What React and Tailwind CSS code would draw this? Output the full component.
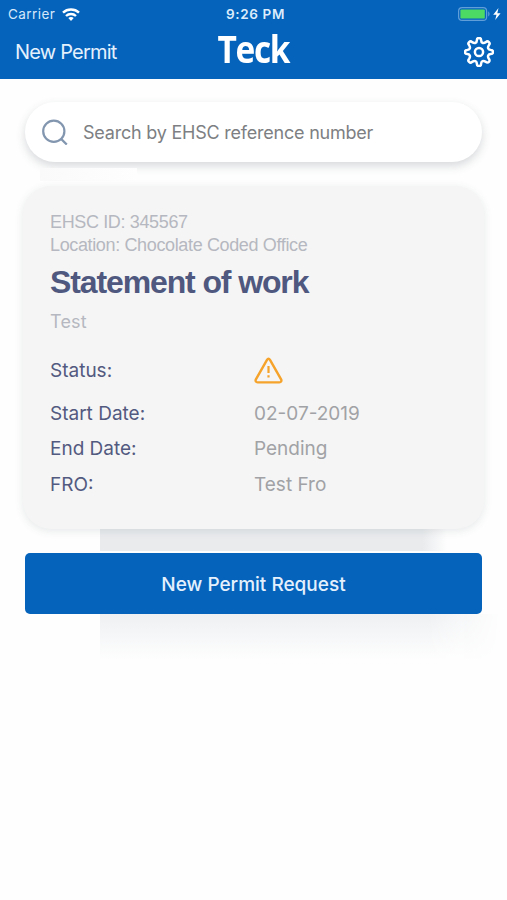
import React, { useState } from "react";

const permit = {
  id: "345567",
  location: "Chocolate Coded Office",
  title: "Statement of work",
  description: "Test",
  startDate: "02-07-2019",
  endDate: "Pending",
  fro: "Test Fro",
};

const WifiIcon = () => (
  <svg className="w-[18px] h-[13px]" viewBox="0 0 18 13" fill="none" stroke="#fff" strokeWidth="2.4">
    <path d="M1 4.7C5.4 0.5 12.6 0.5 17 4.7" />
    <path d="M4 8C6.8 5.3 11.2 5.3 14 8" />
    <path d="M9 12.9L6.3 10C7.8 8.6 10.2 8.6 11.7 10Z" fill="#fff" stroke="none" />
  </svg>
);

const BatteryIcon = () => (
  <svg className="w-[45px] h-[14px]" viewBox="0 0 45 14" fill="none">
    <rect x="0.6" y="0.6" width="28" height="12.8" rx="3.5" stroke="#5f9ed8" strokeWidth="1.2" />
    <rect x="2.4" y="2.4" width="24.4" height="9.2" rx="1.2" fill="#4cd964" />
    <path d="M30.2 4.6C32 5.2 32 8.8 30.2 9.4Z" fill="#5f9ed8" />
    <path d="M40.5 1L35.2 7.8H38.5L37.2 13L42.6 6.2H39.3Z" fill="#fff" />
  </svg>
);

const GearIcon = () => (
  <svg
    className="w-[30px] h-[30px]"
    viewBox="0 0 30 30"
    fill="none"
    stroke="#fff"
    strokeWidth="2.5"
    strokeLinejoin="round"
  >
    <circle cx="15" cy="15" r="4.1" />
    <path d="M12.9 3.1A2.1 2.1 0 0 1 17.1 3.1C17.2 5.9 19.1 6.8 21.9 5.1A2.1 2.1 0 0 1 24.9 8.1C23.2 10.9 24.1 12.8 26.9 12.9A2.1 2.1 0 0 1 26.9 17.1C24.1 17.2 23.2 19.1 24.9 21.9A2.1 2.1 0 0 1 21.9 24.9C19.1 23.2 17.2 24.1 17.1 26.9A2.1 2.1 0 0 1 12.9 26.9C12.8 24.1 10.9 23.2 8.1 24.9A2.1 2.1 0 0 1 5.1 21.9C6.8 19.1 5.9 17.2 3.1 17.1A2.1 2.1 0 0 1 3.1 12.9C5.9 12.8 6.8 10.9 5.1 8.1A2.1 2.1 0 0 1 8.1 5.1C10.9 6.8 12.8 5.9 12.9 3.1Z" />
  </svg>
);

const SearchIcon = () => (
  <svg className="w-[26px] h-[26px]" viewBox="0 0 26 26" fill="none" stroke="#8396af" strokeWidth="2.2">
    <circle cx="11.8" cy="12.3" r="10.6" />
    <path d="M18.8 19.6L24.8 25.6" />
  </svg>
);

const WarningIcon = () => (
  <svg
    className="w-[30px] h-[28px]"
    viewBox="0 0 30 28"
    fill="none"
    stroke="#f5a32b"
    strokeWidth="2.4"
    strokeLinejoin="round"
  >
    <path d="M13 2.8L1.9 22.4C1.1 24 2 25.4 3.6 25.4H25.4C27 25.4 27.9 24 27.1 22.4L16 2.8C15.2 1.4 13.8 1.4 13 2.8Z" />
    <path d="M14.5 9V16M14.5 18.2V20.6" strokeWidth="2.2" />
  </svg>
);

const Row = ({ label, children }) => (
  <div className="flex items-center h-[35.5px]">
    <span className="w-[204px] text-[#535a80]">{label}</span>
    <span className="text-[#a1a2a5]">{children}</span>
  </div>
);

const App = () => {
  const [search, setSearch] = useState("");

  return (
    <div className="h-[900px] w-full overflow-hidden bg-[#fefefe] font-['Inter',sans-serif]">
      <header className="h-[79px] bg-[#0563bc] text-white">
        {/* Status bar */}
        <div className="grid grid-cols-3 items-center h-[28px] pl-2 pr-1 text-[13.5px] whitespace-nowrap">
          <div className="flex items-center gap-[7px]">
            <span className="tracking-[0.45px] text-[#d5e8fa]">Carrier</span>
            <WifiIcon />
          </div>
          <span className="text-center font-semibold tracking-[0.65px] text-[#dcecfb]">9:26 PM</span>
          <div className="flex justify-end">
            <BatteryIcon />
          </div>
        </div>
        {/* Nav bar */}
        <div className="grid grid-cols-3 items-center h-[47px] pl-[15px] pr-[13px]">
          <span className="text-[20px] tracking-[-0.8px] text-[#e4f1fd]">New Permit</span>
          <span className="-mt-[7px] -ml-[3px] text-center text-[38px] leading-[44px] font-bold tracking-[-1.5px] scale-x-[0.88] font-['Open_Sans',sans-serif]">
            Teck
          </span>
          <button className="justify-self-end">
            <GearIcon />
          </button>
        </div>
      </header>

      <main className="px-[25px] pt-[23px]">
        <div className="relative">
          <label className="flex items-center h-[60px] pl-[17px] gap-[15px] rounded-full bg-white shadow-[0_4px_10px_rgba(60,70,80,0.2)]">
            <SearchIcon />
            <input
              type="text"
              className="flex-1 bg-transparent text-[18px] tracking-[-0.22px] text-[#808286] placeholder:text-[#7d7f83] focus:outline-none"
              value={search}
              onChange={(e) => setSearch(e.target.value)}
              placeholder="Search by EHSC reference number"
            />
          </label>
          <div className="absolute left-[15px] top-[66px] w-[97px] h-[13px] bg-gradient-to-r from-[#fafafa] to-[#fefefe]" />
        </div>

        {/* Permit card */}
        <section className="relative z-10 mt-6 -mx-[2px] h-[343px] pl-[27px] pt-[25px] rounded-[28px] bg-[#f5f5f5] shadow-[0_2px_8px_rgba(60,70,80,0.12)]">
          <div className="font-['Liberation_Sans',sans-serif] text-[18px] leading-[23px] tracking-[-0.36px] text-[#b5b8c0]">
            <p>EHSC ID: {permit.id}</p>
            <p>Location: {permit.location}</p>
          </div>
          <h1 className="mt-[6px] font-['Liberation_Sans',sans-serif] text-[32px] leading-[38px] font-bold tracking-[-1.12px] text-[#4f587f]">
            {permit.title}
          </h1>
          <p className="mt-[7px] text-[18px] leading-[28px] tracking-[0.2px] text-[#b5b8c0]">{permit.description}</p>
          <div className="mt-[17px] text-[19px]">
            <div className="mb-[7px] h-[36px] flex items-center">
              <span className="w-[204px] text-[#535a80]">Status:</span>
              <WarningIcon />
            </div>
            <Row label="Start Date:">{permit.startDate}</Row>
            <Row label="End Date:">{permit.endDate}</Row>
            <Row label="FRO:">{permit.fro}</Row>
          </div>
        </section>

        <div className="relative mt-6">
          {/* Soft shade behind the button */}
          <div className="absolute left-[75px] right-[35px] -top-[24px] h-[22px] bg-gradient-to-r from-[#e9ebed] from-93% to-[#fefefe]" />
          <div className="absolute left-[75px] -right-[18px] top-[61px] h-[46px] bg-gradient-to-b from-[#eef0f2] to-[#fefefe] mask-r-from-82% mask-r-to-100%" />
          <button className="relative w-full h-[61px] pt-[3px] rounded-[5px] bg-[#0563bc] text-[19px] font-medium text-[#e4f1fd]">
            New Permit Request
          </button>
        </div>
      </main>
    </div>
  );
};

export default App;
